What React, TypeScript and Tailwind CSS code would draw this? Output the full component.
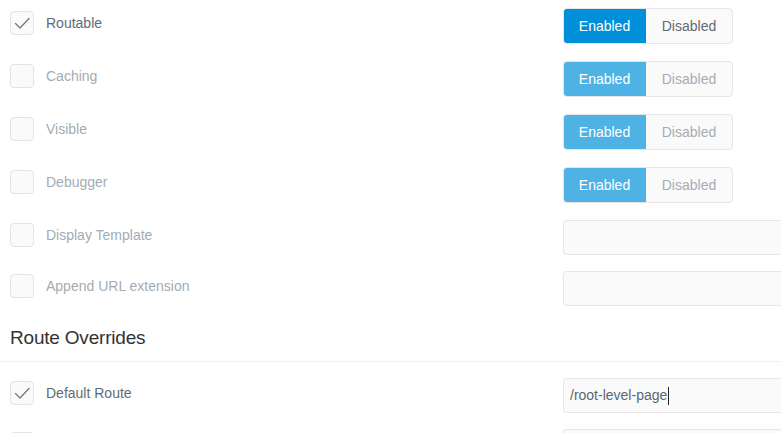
import React from 'react';

type Row = { label: string; checked?: boolean; kind: 'toggle' | 'input'; active?: boolean; value?: string };

const rows: Row[] = [
  { label: 'Routable', checked: true, kind: 'toggle', active: true },
  { label: 'Caching', kind: 'toggle' },
  { label: 'Visible', kind: 'toggle' },
  { label: 'Debugger', kind: 'toggle' },
  { label: 'Display Template', kind: 'input' },
  { label: 'Append URL extension', kind: 'input' },
];

const Check = ({ checked }: { checked?: boolean }) => (
  <div className="w-6 h-6 rounded-[4px] border border-[#e3e3e3] bg-[#fafafa] flex items-center justify-center shrink-0">
    {checked && (
      <svg width="18" height="18" viewBox="0 0 18 18" fill="none">
        <path d="M2.5 9.5 L7 14 L16 4.5" stroke="#6f7a85" strokeWidth="1.3" strokeLinecap="round" strokeLinejoin="round" />
      </svg>
    )}
  </div>
);

const Toggle = ({ active }: { active?: boolean }) => (
  <div className="flex h-9 rounded-[4px] border border-[#e6e6e6] bg-[#fafafa] overflow-hidden text-[14px]">
    <div className={`w-[83px] -my-px -ml-px flex items-center justify-center text-white rounded-l-[4px] ${active ? 'bg-[#0090d9]' : 'bg-[#4fb2e5]'}`}>
      Enabled
    </div>
    <div className={`w-[86px] flex items-center justify-center ${active ? 'text-[#5f6b77]' : 'text-[#a5adb5]'}`}>Disabled</div>
  </div>
);

const Field = ({ value }: { value?: string }) => (
  <div className="h-[35px] flex-1 rounded-l-[4px] border border-[#e6e6e6] border-r-0 bg-[#fafafa] flex items-center pl-[6px] text-[14px] text-[#5c6772]">
    {value}
    {value && <span className="inline-block w-px h-[18px] bg-[#222] ml-px" />}
  </div>
);

const SettingRow = ({ row }: { row: Row }) => (
  <div className={`flex items-start ${row.kind === 'toggle' ? 'h-[53px]' : 'h-[51px]'}`}>
    <div className="flex items-center gap-3 pl-[10px] mt-[3px] w-[563px] shrink-0">
      <Check checked={row.checked} />
      <span className={`text-[14px] ${row.checked ? 'text-[#5f6b77]' : 'text-[#a3acb4]'}`}>{row.label}</span>
    </div>
    {row.kind === 'toggle' ? <Toggle active={row.active} /> : <Field value={row.value} />}
  </div>
);

export default function App() {
  return (
    <div className="w-[781px] h-[433px] overflow-hidden bg-white pt-2" style={{ fontFamily: '"Liberation Sans", Arial, sans-serif' }}>
      {rows.map((r) => (
        <SettingRow key={r.label} row={r} />
      ))}
      <div className="border-b border-[#f0f0f0] pl-[10px] pt-[4px] pb-[11px] text-[19px] leading-[24px] text-[#333] tracking-[-0.2px]">
        Route Overrides
      </div>
      <div className="pt-4">
        <SettingRow row={{ label: 'Default Route', checked: true, kind: 'input', value: '/root-level-page' }} />
        <SettingRow row={{ label: '', kind: 'input' }} />
      </div>
    </div>
  );
}
